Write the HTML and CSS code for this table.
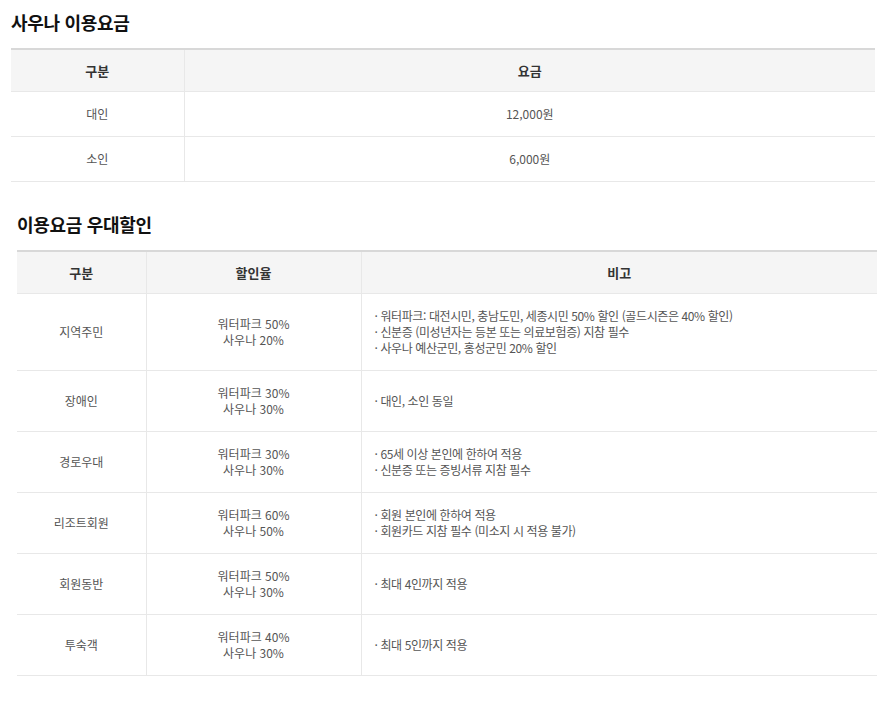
FILE: index.html
```html
<!DOCTYPE html>
<html lang="ko">
<head>
<meta charset="utf-8">
<link rel="stylesheet" href="styles.css">
</head>
<body>
<section class="sec sec-sauna">
  <h2 class="title">사우나 이용요금</h2>
  <table class="tbl tbl-sauna">
    <colgroup><col class="c1"><col></colgroup>
    <thead><tr><th>구분</th><th>요금</th></tr></thead>
    <tbody>
      <tr><td>대인</td><td>12,000원</td></tr>
      <tr><td>소인</td><td>6,000원</td></tr>
    </tbody>
  </table>
</section>
<section class="sec sec-disc">
  <h2 class="title">이용요금 우대할인</h2>
  <table class="tbl tbl-disc">
    <colgroup><col class="d1"><col class="d2"><col></colgroup>
    <thead><tr><th>구분</th><th>할인율</th><th>비고</th></tr></thead>
    <tbody>
      <tr><td>지역주민</td><td>워터파크 50%<br>사우나 20%</td><td class="note">· 워터파크: 대전시민, 충남도민, 세종시민 50% 할인 (골드시즌은 40% 할인)<br>· 신분증 (미성년자는 등본 또는 의료보험증) 지참 필수<br>· 사우나 예산군민, 홍성군민 20% 할인</td></tr>
      <tr><td>장애인</td><td>워터파크 30%<br>사우나 30%</td><td class="note">· 대인, 소인 동일</td></tr>
      <tr><td>경로우대</td><td>워터파크 30%<br>사우나 30%</td><td class="note">· 65세 이상 본인에 한하여 적용<br>· 신분증 또는 증빙서류 지참 필수</td></tr>
      <tr><td>리조트회원</td><td>워터파크 60%<br>사우나 50%</td><td class="note">· 회원 본인에 한하여 적용<br>· 회원카드 지참 필수 (미소지 시 적용 불가)</td></tr>
      <tr><td>회원동반</td><td>워터파크 50%<br>사우나 30%</td><td class="note">· 최대 4인까지 적용</td></tr>
      <tr><td>투숙객</td><td>워터파크 40%<br>사우나 30%</td><td class="note">· 최대 5인까지 적용</td></tr>
    </tbody>
  </table>
</section>
</body>
</html>
```
FILE: styles.css
```css
html, body {
  margin: 0;
  padding: 0;
  background: #fff;
}
body {
  font-family: "Noto Sans CJK KR", "Noto Sans", sans-serif;
  color: #555;
  font-size: 12px;
}
.sec-sauna {
  padding: 10px 13px 0 11px;
}
.sec-disc {
  padding: 30px 11px 0 17px;
}
.title {
  margin: 0;
  font-size: 18px;
  font-weight: 700;
  color: #111;
  line-height: 24px;
  letter-spacing: -0.3px;
}
.tbl {
  width: 100%;
  border-collapse: collapse;
  table-layout: fixed;
  border-top: 2px solid #d8d8d8;
}
.sec-sauna .tbl { margin-top: 14px; }
.sec-disc .tbl { margin-top: 14px; }
.c1 { width: 173px; }
.d1 { width: 129px; }
.d2 { width: 215px; }
.tbl th {
  background: #f5f5f5;
  color: #333;
  font-weight: 700;
  font-size: 13px;
  height: 41px;
  padding: 0;
  border-bottom: 1px solid #e8e8e8;
  border-left: 1px solid #e8e8e8;
}
.tbl td {
  text-align: center;
  border-bottom: 1px solid #e8e8e8;
  border-left: 1px solid #e8e8e8;
  line-height: 16px;
  padding: 14px 0;
}
.tbl th:first-child, .tbl td:first-child {
  border-left: none;
}
.tbl-sauna td {
  height: 16px;
}
.tbl td.note {
  text-align: left;
  padding-left: 13px;
  letter-spacing: -0.4px;
}
```
